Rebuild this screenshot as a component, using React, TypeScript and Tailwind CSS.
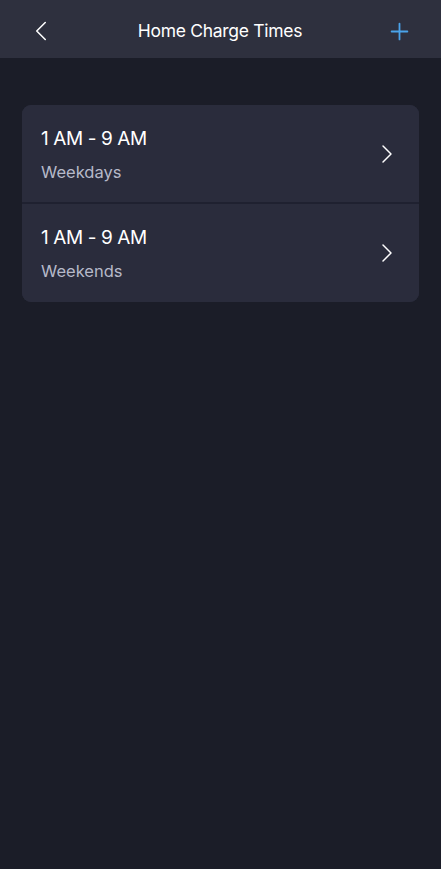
import { ChevronLeft, ChevronRight, Plus } from 'lucide-react';

const schedules = [
  { time: '1 AM - 9 AM', days: 'Weekdays' },
  { time: '1 AM - 9 AM', days: 'Weekends' },
];

export default function App() {
  return (
    <div className="min-h-[869px] bg-[#1b1d28] font-['Inter',sans-serif] text-white">
      {/* Header */}
      <header className="h-[58px] bg-[#2e303e] flex items-center pl-[24px] pr-[28px] pt-[4px]">
        <div className="w-[53px] flex justify-start">
          <ChevronLeft size={34} strokeWidth={1.1} className="text-white" />
        </div>
        <h1 className="flex-1 text-center text-[17.5px] tracking-[-0.3px]">Home Charge Times</h1>
        <div className="w-[50px] flex justify-end">
          <Plus size={27} strokeWidth={1.6} className="text-[#4aa3ea]" />
        </div>
      </header>

      <div className="px-[22px] pt-[47px]">
        <div className="rounded-[9px] bg-[#2a2c3c] overflow-hidden flex flex-col">
          {schedules.map((s, i) => (
            <div
              key={i}
              className={`flex items-center justify-between pl-[19px] pr-[16px] bg-[#2a2c3c] ${i === 0 ? 'h-[99px] border-b-2 border-[#1f2130]' : 'h-[98px]'}`}
            >
              <div className="flex flex-col gap-[10px] pt-[2px]">
                <span className="text-[19px] leading-[24px] tracking-[-0.4px]">{s.time}</span>
                <span className="text-[16.5px] leading-[22px] text-[#b6b9c9]">{s.days}</span>
              </div>
              <ChevronRight size={32} strokeWidth={1.1} className="text-white" />
            </div>
          ))}
        </div>
      </div>
    </div>
  );
}
